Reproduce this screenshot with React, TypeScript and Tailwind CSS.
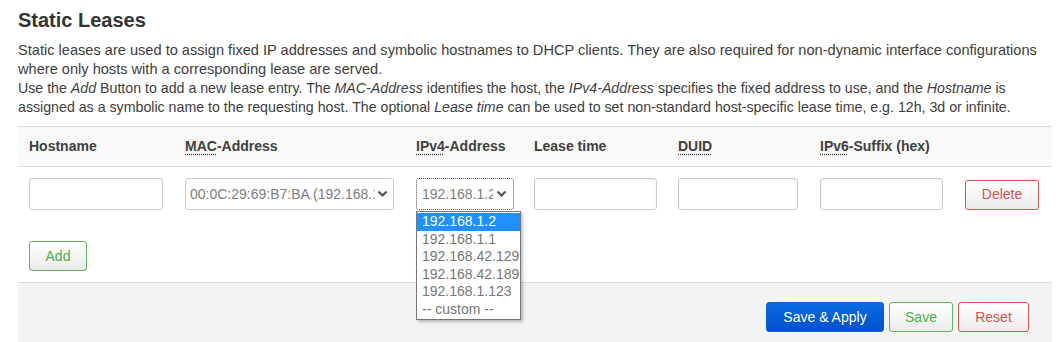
import React from 'react';

const font = { fontFamily: '"Liberation Sans", Arial, sans-serif' };

const Abbr = ({ children }: { children: React.ReactNode }) => (
  <span className="underline decoration-dotted decoration-[#404040] underline-offset-[3px]">{children}</span>
);

const Chevron = () => (
  <svg width="11" height="8" viewBox="0 0 11 8" className="shrink-0">
    <polyline points="1.5,1.5 5.5,5.5 9.5,1.5" fill="none" stroke="#555" strokeWidth="2.2" />
  </svg>
);

const TextInput = ({ w }: { w: string }) => (
  <div className={`${w} h-[32px] rounded-[3px] border border-[#ccc] bg-white shadow-[inset_0_1px_2px_rgba(0,0,0,0.08)]`} />
);

const Btn = ({ label, tone, w }: { label: string; tone: 'green' | 'red' | 'blue'; w: string }) => {
  const cls =
    tone === 'blue'
      ? 'border-[#0b5ed7] bg-gradient-to-b from-[#0a6be0] to-[#0052cc] text-white'
      : tone === 'green'
        ? 'border-[#5cb85c] bg-gradient-to-b from-white to-[#ebebeb] text-[#4cae4c]'
        : 'border-[#d9534f] bg-gradient-to-b from-white to-[#ebebeb] text-[#d9534f]';
  return (
    <div className={`${w} h-[30px] rounded-[3px] border flex items-center justify-center text-[14px] ${cls}`}>
      {label}
    </div>
  );
};

const options = ['192.168.1.2', '192.168.1.1', '192.168.42.129', '192.168.42.189', '192.168.1.123', '-- custom --'];

export default function App() {
  return (
    <div className="w-[1060px] h-[342px] overflow-hidden bg-white text-[#404040] pl-[18px] pr-[8px]" style={font}>
      <h2 className="text-[20px] font-bold leading-[24px] pt-[8px] text-[#333]">Static Leases</h2>
      <p className="text-[14.6px] leading-[19px] mt-[9px] text-[#404040]">
        Static leases are used to assign fixed IP addresses and symbolic hostnames to DHCP clients. They are also
        required for non-dynamic interface configurations where only hosts with a corresponding lease are served.
        <br />
        <span className="text-[14.2px]">
          Use the <em>Add</em> Button to add a new lease entry. The <em>MAC-Address</em> identifies the host, the{' '}
          <em>IPv4-Address</em> specifies the fixed address to use, and the <em>Hostname</em> is assigned as a symbolic
          name to the requesting host. The optional <em>Lease time</em> can be used to set non-standard host-specific
          lease time, e.g. 12h, 3d or infinite.
        </span>
      </p>

      <div className="mt-[9px]">
        {/* header */}
        <div className="grid grid-cols-[156px_231px_118px_144px_142px_145px_1fr] pl-[11px] h-[41px] items-center bg-[#f9f9f9] border-y border-[#ddd] text-[14px] font-bold text-[#404040]">
          <div>Hostname</div>
          <div>
            <Abbr>MAC</Abbr>-Address
          </div>
          <div>
            <Abbr>IPv4</Abbr>-Address
          </div>
          <div>Lease time</div>
          <div>
            <Abbr>DUID</Abbr>
          </div>
          <div>
            <Abbr>IPv6</Abbr>-Suffix (hex)
          </div>
          <div />
        </div>

        {/* row */}
        <div className="grid grid-cols-[156px_231px_118px_144px_142px_145px_1fr] pl-[11px] pt-[11px] items-center">
          <TextInput w="w-[134px]" />
          <div className="w-[209px] h-[32px] rounded-[3px] border border-[#ccc] bg-white flex items-center pl-[4px] pr-[5px] gap-[2px] text-[14px] text-[#808080]">
            <span className="overflow-hidden whitespace-nowrap flex-1">00:0C:29:69:B7:BA (192.168.1.2)</span>
            <Chevron />
          </div>
          <div className="relative">
            <div className="w-[98px] h-[32px] rounded-[3px] border border-dotted border-[#555] bg-white flex items-center pl-[5px] pr-[6px] gap-[3px] text-[14px] text-[#808080]">
              <span className="overflow-hidden whitespace-nowrap flex-1">192.168.1.2</span>
              <Chevron />
            </div>
            <div className="absolute left-0 top-[33px] w-[105px] border border-[#767676] bg-white shadow-[2px_2px_3px_rgba(0,0,0,0.25)] z-10 py-px">
              {options.map((o, i) => (
                <div
                  key={o}
                  className={`h-[17.5px] leading-[17.5px] pl-[5px] text-[14px] whitespace-nowrap ${
                    i === 0 ? 'bg-[#1e90ff] text-white' : 'text-[#777]'
                  }`}
                >
                  {o}
                </div>
              ))}
            </div>
          </div>
          <TextInput w="w-[123px]" />
          <TextInput w="w-[120px]" />
          <TextInput w="w-[123px]" />
          <div className="pt-[1px]">
            <Btn label="Delete" tone="red" w="w-[74px]" />
          </div>
        </div>

        <div className="pl-[11px] pt-[31px] pb-[11px]">
          <Btn label="Add" tone="green" w="w-[58px]" />
        </div>

        {/* footer */}
        <div className="h-[80px] bg-[#f3f3f3] border-t border-[#ddd] flex justify-end items-start gap-[5px] pr-[23px] pt-[19px]">
          <Btn label="Save & Apply" tone="blue" w="w-[118px]" />
          <Btn label="Save" tone="green" w="w-[64px]" />
          <Btn label="Reset" tone="red" w="w-[71px]" />
        </div>
      </div>
    </div>
  );
}
